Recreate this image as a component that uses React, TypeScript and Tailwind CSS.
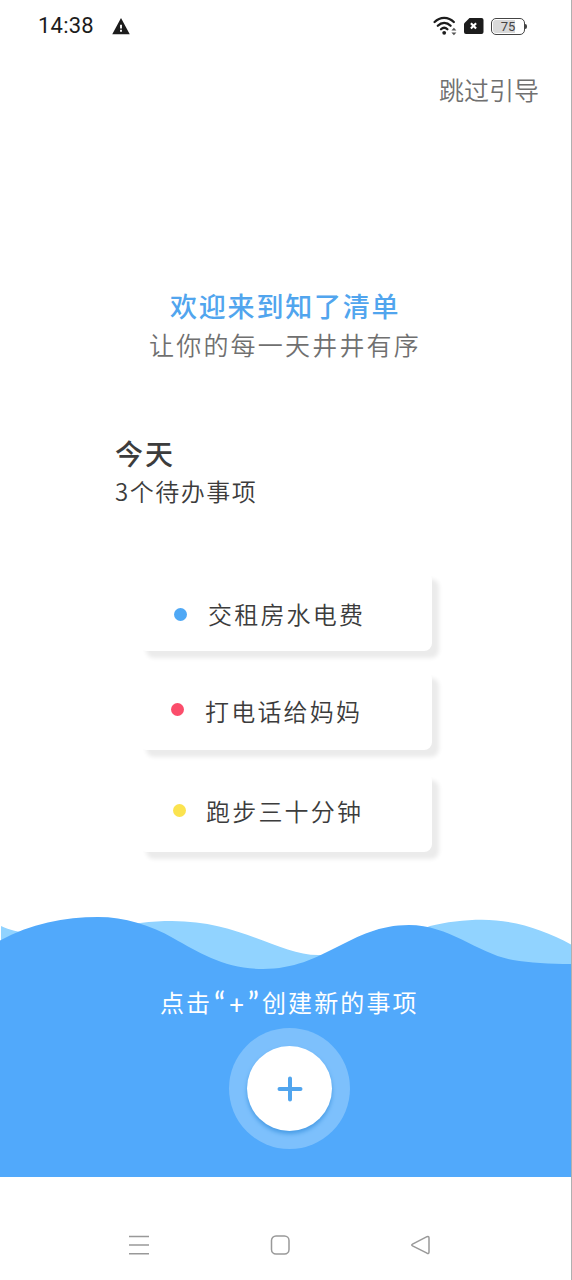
import { IoMdWarning } from "react-icons/io";

const tarefas = [
  {
    texto: "交租房水电费",
    linha: "h-[79px] pl-[35px] mb-5",
    cor: "bg-[#4fa8f5] mt-1.5",
    gap: "gap-[21px]",
    ajuste: "mt-[5px]",
  },
  {
    texto: "打电话给妈妈",
    linha: "h-[79px] pl-8 mb-[23px]",
    cor: "bg-[#fb4d6b] -mt-0.5",
    gap: "gap-[21px]",
    ajuste: "mt-0",
  },
  {
    texto: "跑步三十分钟",
    linha: "h-[79px] pl-[34px]",
    cor: "bg-[#fbe34f] -mt-1",
    gap: "gap-[20px]",
    ajuste: "-mt-[3px]",
  },
];

function StatusBar() {
  return (
    <header className="h-[52px] pl-[38px] pr-11 flex items-center justify-between text-[#1c1c1c]">
      <div className="flex items-center">
        <span className="font-[Roboto] text-[22px] leading-none w-[73px] tracking-[0.2px]">14:38</span>
        <IoMdWarning className="w-5 h-5" />
      </div>

      <div className="flex items-center">
        {/* wifi */}
        <svg width="24" height="20" viewBox="0 0 24 20" fill="none" stroke="#1c1c1c" strokeWidth="2.3" strokeLinecap="round">
          <path d="M1.6 6C7 0.4 15.4 0.4 20.8 6" />
          <path d="M4.8 9.8C8.6 5.9 13.8 5.9 17.6 9.8" />
          <path d="M8 13.3C10 11.3 12.4 11.3 14.4 13.3" />
          <circle cx="11.2" cy="16.8" r="1.9" fill="#1c1c1c" stroke="none" />
          <path d="M18.4 14.5L20.9 11.8L23.4 14.5ZM18.4 16.5L20.9 19.2L23.4 16.5Z" fill="#555" stroke="none" />
        </svg>
        {/* sim */}
        <svg className="ml-[7px]" width="20" height="16" viewBox="0 0 20 16">
          <path d="M5.5 0H17.5Q19.5 0 19.5 2V14Q19.5 16 17.5 16H2Q0 16 0 14V5.5Z" fill="#1c1c1c" />
          <path d="M6.9 5.2L12.1 10.6M12.1 5.2L6.9 10.6" stroke="#fff" strokeWidth="2.1" />
        </svg>
        {/* bateria */}
        <div className="ml-[7px] flex items-center">
          <div className="w-[34px] h-[17px] rounded-[5px] border-[1.5px] border-[#444] p-px">
            <div className="h-full w-full rounded-[3px] bg-linear-to-r from-[#d9d9d9] from-75% to-white to-75% flex items-center justify-center font-[Roboto] text-[13px] leading-none text-[#444] pt-px">
              75
            </div>
          </div>
          <div className="w-0.5 h-[5px] bg-[#444] rounded-r" />
        </div>
      </div>
    </header>
  );
}

function Ondas() {
  return (
    <svg className="block" width="572" height="70" viewBox="0 0 572 70">
      <path
        d="M1 16C10 20 18 22 30 23L140 13C152 11.4 162 11 172 11C240 11 280 45 318 45H360L430 16C445 12 465 9.7 482 9.7C515 10 545 20 572 35V70H1Z"
        fill="#91d3ff"
      />
      <path
        d="M0 30.5C30 14 65 7 98 7C125 7 150 15 173 28C200 43 225 59 263 59C325 59 350 15 409 15C450 15 478 44 513 50C530 53 550 54 572 54V70H0Z"
        fill="#51a9fb"
      />
    </svg>
  );
}

export default function App() {
  return (
    <div className="w-[572px] h-[1280px] overflow-hidden bg-white border-r border-[#b0b0b0] flex flex-col font-['Noto_Sans_CJK_SC',sans-serif]">
      <StatusBar />

      <div className="h-[76px] flex justify-end pr-8">
        <button className="h-[74px] text-[25px] leading-[74px] text-[#707070] font-[350]">跳过引导</button>
      </div>

      {/* TITULO */}
      <section className="mt-[158px] pl-[149px] whitespace-nowrap">
        <h1 className="pl-[21px] h-[40px] leading-[40px] text-[27px] tracking-[1.8px] font-medium text-[#51a5ee]">
          欢迎来到知了清单
        </h1>
        <p className="h-[38px] leading-[36px] text-[25px] tracking-[2.2px] font-[350] text-[#707070]">
          让你的每一天井井有序
        </p>
      </section>

      {/* HOJE */}
      <section className="mt-[69px] pl-[115px] text-[#3c3c3c]">
        <h2 className="h-10 leading-10 text-[28px] tracking-[2px] font-medium">今天</h2>
        <p className="h-[38px] leading-[35px] text-[24px] tracking-[1.5px] font-[350]">3个待办事项</p>
      </section>

      {/* TAREFAS */}
      <ul className="mt-[61px] pl-[139px]">
        {tarefas.map((item) => (
          <li
            key={item.texto}
            className={`${item.linha} ${item.gap} w-[293px] flex items-center rounded-[8px] bg-white shadow-[7px_7px_4px_0px_#ebebeb]`}
          >
            <span className={`${item.cor} w-[13px] h-[13px] rounded-full shrink-0`} />
            <span className={`${item.ajuste} text-[24px] leading-9 tracking-[2.2px] font-[350] text-[#3c3c3c]`}>
              {item.texto}
            </span>
          </li>
        ))}
      </ul>

      <div className="mt-[58px]">
        <Ondas />
        <div className="h-[197px] bg-[#51a9fb]">
          <div className="pl-[160px] pt-1 h-[48px] whitespace-nowrap flex text-[24px] leading-9 tracking-[2.1px] text-white">
            <span className="w-[53px] shrink-0">点击</span>
            <span className="font-[Lato] font-medium w-[49px] shrink-0 flex justify-between pl-px pr-[3px] tracking-normal">
              <span className="text-[30px]">“</span>
              <span className="pt-0.5 text-[26px]">+</span>
              <span className="text-[30px]">”</span>
            </span>
            <span>创建新的事项</span>
          </div>
          <button className="ml-[229px] w-[121px] h-[121px] rounded-full bg-[#7dc0fc] flex items-center justify-center">
            <span className="w-[85px] h-[85px] rounded-full bg-white shadow-[0_3px_4px_0_#489ce6] flex items-center justify-center">
              <svg width="26" height="26" viewBox="0 0 26 26" stroke="#51a5ee" strokeWidth="4" strokeLinecap="round">
                <path d="M13 2.5V23.5M2.5 13H23.5" />
              </svg>
            </span>
          </button>
        </div>
      </div>

      <nav className="mt-[58px] pl-[129px] flex items-center">
        <svg width="20" height="20" viewBox="0 0 20 20" stroke="#999" strokeWidth="1.6">
          <path d="M0 1.5H20M0 10H20M0 18.8H20" />
        </svg>
        <svg className="ml-[121px]" width="20" height="20" viewBox="0 0 20 20" fill="none" stroke="#999" strokeWidth="1.5">
          <rect x="1.5" y="1" width="17.5" height="18" rx="4.5" />
        </svg>
        <svg className="ml-[121px]" width="20" height="20" viewBox="0 0 20 20" fill="none" stroke="#999" strokeWidth="1.5" strokeLinejoin="round">
          <path d="M1.5 9.2L16 1.7Q18 1 18 3V17Q18 19 16 18.2L1.5 10.8Q0 10 1.5 9.2Z" />
        </svg>
      </nav>
    </div>
  );
}
